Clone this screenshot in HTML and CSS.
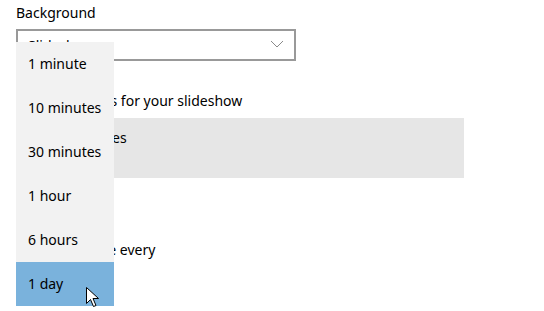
FILE: index.html
```html
<!DOCTYPE html>
<html lang="en">
<head>
    <meta charset="UTF-8">
    <title>Background</title>
    <link rel="stylesheet" href="styles.css">
</head>
<body>

<div class="page">
    <div class="label">Background</div>

    <div class="select">
        <span class="select-value">Slideshow</span>
        <svg class="chevron" width="14" height="8" viewBox="0 0 14 8">
            <polyline points="1,1 7,7 13,1" fill="none" stroke="#8a8a8a" stroke-width="1"/>
        </svg>
    </div>

    <div class="label albums-label">Choose albums for your slideshow</div>

    <div class="album-tile">
        <span class="tile-text">Pictures</span>
    </div>

    <div class="label change-label">Change picture every</div>

    <ul class="menu">
        <li>1 minute</li>
        <li>10 minutes</li>
        <li>30 minutes</li>
        <li>1 hour</li>
        <li>6 hours</li>
        <li class="selected">1 day</li>
    </ul>

    <svg class="cursor" width="14" height="21" viewBox="0 0 14 21">
        <path d="M0.5 0.5 L0.5 16.5 L4.5 12.5 L7.5 19.5 L10 18.5 L7 11.5 L12.5 11.5 Z" fill="#fff" stroke="#000" stroke-width="1" stroke-linejoin="miter"/>
    </svg>
</div>

</body>
</html>
```

FILE: styles.css
```css
* {
    box-sizing: border-box;
}

body {
    margin: 0;
    background: #fff;
    color: #000;
    font-family: 'Noto Sans', sans-serif;
    font-size: 14px;
}

.page {
    position: relative;
    padding: 3px 16px 0;
    height: 311px;
    overflow: hidden;
}

.label {
    line-height: 20px;
}

.select {
    display: flex;
    align-items: center;
    justify-content: space-between;
    width: 280px;
    height: 32px;
    margin-top: 6px;
    padding: 0 10px 0 10px;
    border: 2px solid #999;
}

.chevron {
    margin-top: -2px;
}

.albums-label {
    margin-top: 30px;
}

.album-tile {
    width: 448px;
    height: 60px;
    margin-top: 7px;
    padding: 10px 0 0 58px;
    background: #e6e6e6;
}

.change-label {
    margin-top: 62px;
}

.menu {
    position: absolute;
    left: 16px;
    top: 42px;
    width: 98px;
    margin: 0;
    padding: 0;
    list-style: none;
    background: #f2f2f2;
}

.menu li {
    height: 44px;
    line-height: 44px;
    padding-left: 12px;
    font-size: 14px;
}

.menu li.selected {
    background: #7ab2dc;
}

.cursor {
    position: absolute;
    left: 86px;
    top: 287px;
}
```
